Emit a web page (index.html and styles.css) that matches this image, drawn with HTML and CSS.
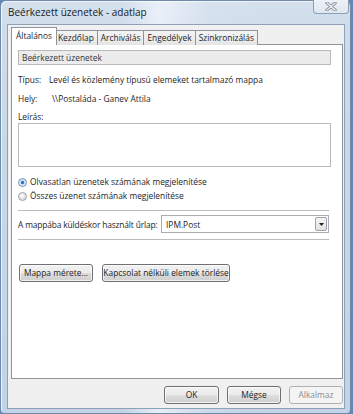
FILE: index.html
```html
<!DOCTYPE html>
<html lang="hu">
<head>
    <meta charset="UTF-8">
    <meta name="viewport" content="width=device-width, initial-scale=1.0">
    <title>Beérkezett üzenetek - adatlap</title>
    <link rel="stylesheet" href="styles.css">
</head>
<body>

    <div class="window">
        <!-- title bar -->
        <div class="titlebar">
            <span class="title">Beérkezett üzenetek - adatlap</span>
            <div class="close">
                <svg width="12" height="9" viewBox="0 0 12 9">
                    <path d="M2 1 L10 8 M10 1 L2 8" stroke="#8b8f96" stroke-width="3" stroke-linecap="square" fill="none"/>
                    <path d="M2 1 L10 8 M10 1 L2 8" stroke="#f4f6f8" stroke-width="1.2" stroke-linecap="square" fill="none"/>
                </svg>
            </div>
        </div>

        <div class="client">
            <!-- tabs -->
            <div class="tabs">
                <div class="tab active">Általános</div>
                <div class="tab">Kezdőlap</div>
                <div class="tab">Archiválás</div>
                <div class="tab">Engedélyek</div>
                <div class="tab">Szinkronizálás</div>
            </div>

            <div class="panel">
                <div class="name-field">Beérkezett üzenetek</div>

                <div class="info-row first">
                    <span class="info-label">Típus:</span>
                    <span>Levél és közlemény típusú elemeket tartalmazó mappa</span>
                </div>
                <div class="info-row">
                    <span class="info-label">Hely:</span>
                    <span class="path">\\Postaláda - Ganev Attila</span>
                </div>

                <div class="label">Leírás:</div>
                <div class="textarea"></div>

                <div class="radio first">
                    <span class="dot checked"></span>
                    <span>Olvasatlan üzenetek számának megjelenítése</span>
                </div>
                <div class="radio">
                    <span class="dot"></span>
                    <span>Összes üzenet számának megjelenítése</span>
                </div>

                <div class="sep"></div>

                <div class="form-row">
                    <span class="form-label">A mappába küldéskor használt űrlap:</span>
                    <div class="select">
                        <span>IPM.Post</span>
                        <span class="select-btn">
                            <svg width="5" height="3" viewBox="0 0 5 3"><path d="M0 0 H5 L2.5 3 Z" fill="#222"/></svg>
                        </span>
                    </div>
                </div>

                <div class="sep second"></div>

                <div class="actions">
                    <div class="btn btn-size">Mappa mérete...</div>
                    <div class="btn btn-clear">Kapcsolat nélküli elemek törlése</div>
                </div>
            </div>

            <!-- dialog buttons -->
            <div class="footer">
                <div class="btn btn-ok">OK</div>
                <div class="btn btn-cancel">Mégse</div>
                <div class="btn btn-apply disabled">Alkalmaz</div>
            </div>
        </div>
    </div>

</body>
</html>
```

FILE: styles.css
```css
* {
  margin: 0;
  padding: 0;
  box-sizing: border-box;
}

body {
  width: 353px;
  height: 414px;
  overflow: hidden;
  background: #5f87b8;
  font-family: "Open Sans", "Noto Sans", sans-serif;
  font-size: 8.4px;
  color: #1e1e1e;
  white-space: nowrap;
}

/* aero frame */
.window {
  width: 351px;
  height: 414px;
  border: 1px solid #6f8aa8;
  border-radius: 6px 6px 4px 4px;
  background:
    linear-gradient(90deg, rgba(255,255,255,0) 35%, rgba(240,244,250,0.8) 45%, rgba(220,230,242,0.3) 60%, rgba(255,255,255,0) 78%),
    linear-gradient(180deg, #d4e0ee 0%, #cddbea 8%, #c7d7e9 50%, #c2d3e7 100%);
  box-shadow: inset 1px 1px 0 rgba(255,255,255,0.7);
}

.titlebar {
  height: 23px;
  display: flex;
  justify-content: space-between;
  align-items: flex-start;
  padding-left: 7px;
}

.title {
  font-size: 10px;
  line-height: 10px;
  margin-top: 6px;
  color: #1a1a1a;
}

.close {
  width: 36px;
  height: 15px;
  margin-top: -2px;
  margin-right: 1px;
  border: 1px solid #8d9db3;
  border-top: none;
  border-radius: 0 0 4px 4px;
  background: linear-gradient(#eef2f7, #dfe7f0);
  display: flex;
  justify-content: center;
  align-items: center;
  padding-top: 1px;
}

.client {
  margin-left: 6px;
  width: 338px;
  height: 385px;
  border: 1px solid #8ea1b6;
  background-color: #f0f0f0;
  padding: 2px 1px 0 3px;
}

/* tabs */
.tabs {
  display: flex;
  align-items: flex-end;
  height: 18px;
  padding-left: 3px;
  position: relative;
  z-index: 1;
}

.tab {
  height: 15px;
  line-height: 13px;
  padding: 0 3px;
  border: 1px solid #8e949c;
  border-bottom: none;
  margin-left: -1px;
  background: linear-gradient(#f4f4f4, #e5e5e5);
  color: #1e1e1e;
}

.tab.active {
  height: 18px;
  line-height: 16px;
  padding: 0 4px;
  margin: 0 -2px 0 -3px;
  background: #ffffff;
  position: relative;
  z-index: 2;
}

.panel {
  height: 335px;
  margin-top: -1px;
  border: 1px solid #8e949c;
  background-color: #ffffff;
  padding: 5px 11px 0 6px;
}

.name-field {
  height: 15px;
  line-height: 13px;
  padding-left: 3px;
  border: 1px solid #b8b8b8;
  background: #ececec;
  color: #333;
}

.info-row {
  display: flex;
  line-height: 12px;
  margin-top: 7px;
}
.info-row.first {
  margin-top: 9px;
}

.info-label {
  width: 31px;
}

.path {
  margin-left: 3px;
}

.label {
  line-height: 12px;
  margin-top: 6px;
}

.textarea {
  height: 44px;
  border: 1px solid #b7b9bd;
  background: #fff;
}

.radio {
  display: flex;
  align-items: center;
  line-height: 12px;
  margin-top: 2px;
  gap: 3px;
}
.radio.first {
  margin-top: 9px;
}

.dot {
  width: 9px;
  height: 9px;
  border-radius: 50%;
  border: 1px solid #9aa0a6;
  background: radial-gradient(circle at 40% 35%, #ffffff, #dcdcdc 70%, #c9c9c9);
}
.dot.checked {
  background: radial-gradient(circle, #2b68b5 0, #3f86d4 30%, #dbe6f2 45%, #f5f5f5 100%);
  border-color: #6a8fb9;
}

.sep {
  height: 2px;
  margin-top: 8px;
  margin-right: 2px;
  border-top: 1px solid #bcbcbc;
  border-bottom: 1px solid #ffffff;
}
.sep.second {
  margin-top: 6px;
}

.form-row {
  display: flex;
  align-items: center;
  justify-content: space-between;
  margin-top: 3px;
  padding-right: 2px;
}

.form-label {
  flex-shrink: 0;
  letter-spacing: -0.15px;
}

.select {
  flex-shrink: 0;
  width: 168px;
  height: 18px;
  border: 1px solid #a9acb2;
  background: #fff;
  display: flex;
  align-items: center;
  justify-content: space-between;
  padding: 0 1px 0 4px;
}

.select-btn {
  width: 12px;
  height: 14px;
  border: 1px solid #9ea3aa;
  border-radius: 2px;
  background: linear-gradient(#f6f6f6, #e2e2e2);
  display: flex;
  justify-content: center;
  align-items: center;
}

.actions {
  display: flex;
  gap: 9px;
  margin-top: 23px;
  padding-left: 1px;
}

/* win7 style push button */
.btn {
  height: 18px;
  line-height: 16px;
  text-align: center;
  border: 1px solid #707070;
  border-radius: 3px;
  background: linear-gradient(#f2f2f2 0%, #ebebeb 48%, #dddddd 52%, #cfcfcf 100%);
  box-shadow: inset 0 0 0 1px rgba(255,255,255,0.7);
  color: #1e1e1e;
}

.btn-size {
  width: 74px;
}
.btn-clear {
  width: 128px;
}

.footer {
  display: flex;
  justify-content: flex-end;
  gap: 8px;
  margin-top: 7px;
}

.btn-ok {
  width: 55px;
}
.btn-cancel,
.btn-apply {
  width: 54px;
}

.btn.disabled {
  border-color: #adb2b5;
  background: #f4f4f4;
  box-shadow: none;
  color: #8d8d8d;
}
```
